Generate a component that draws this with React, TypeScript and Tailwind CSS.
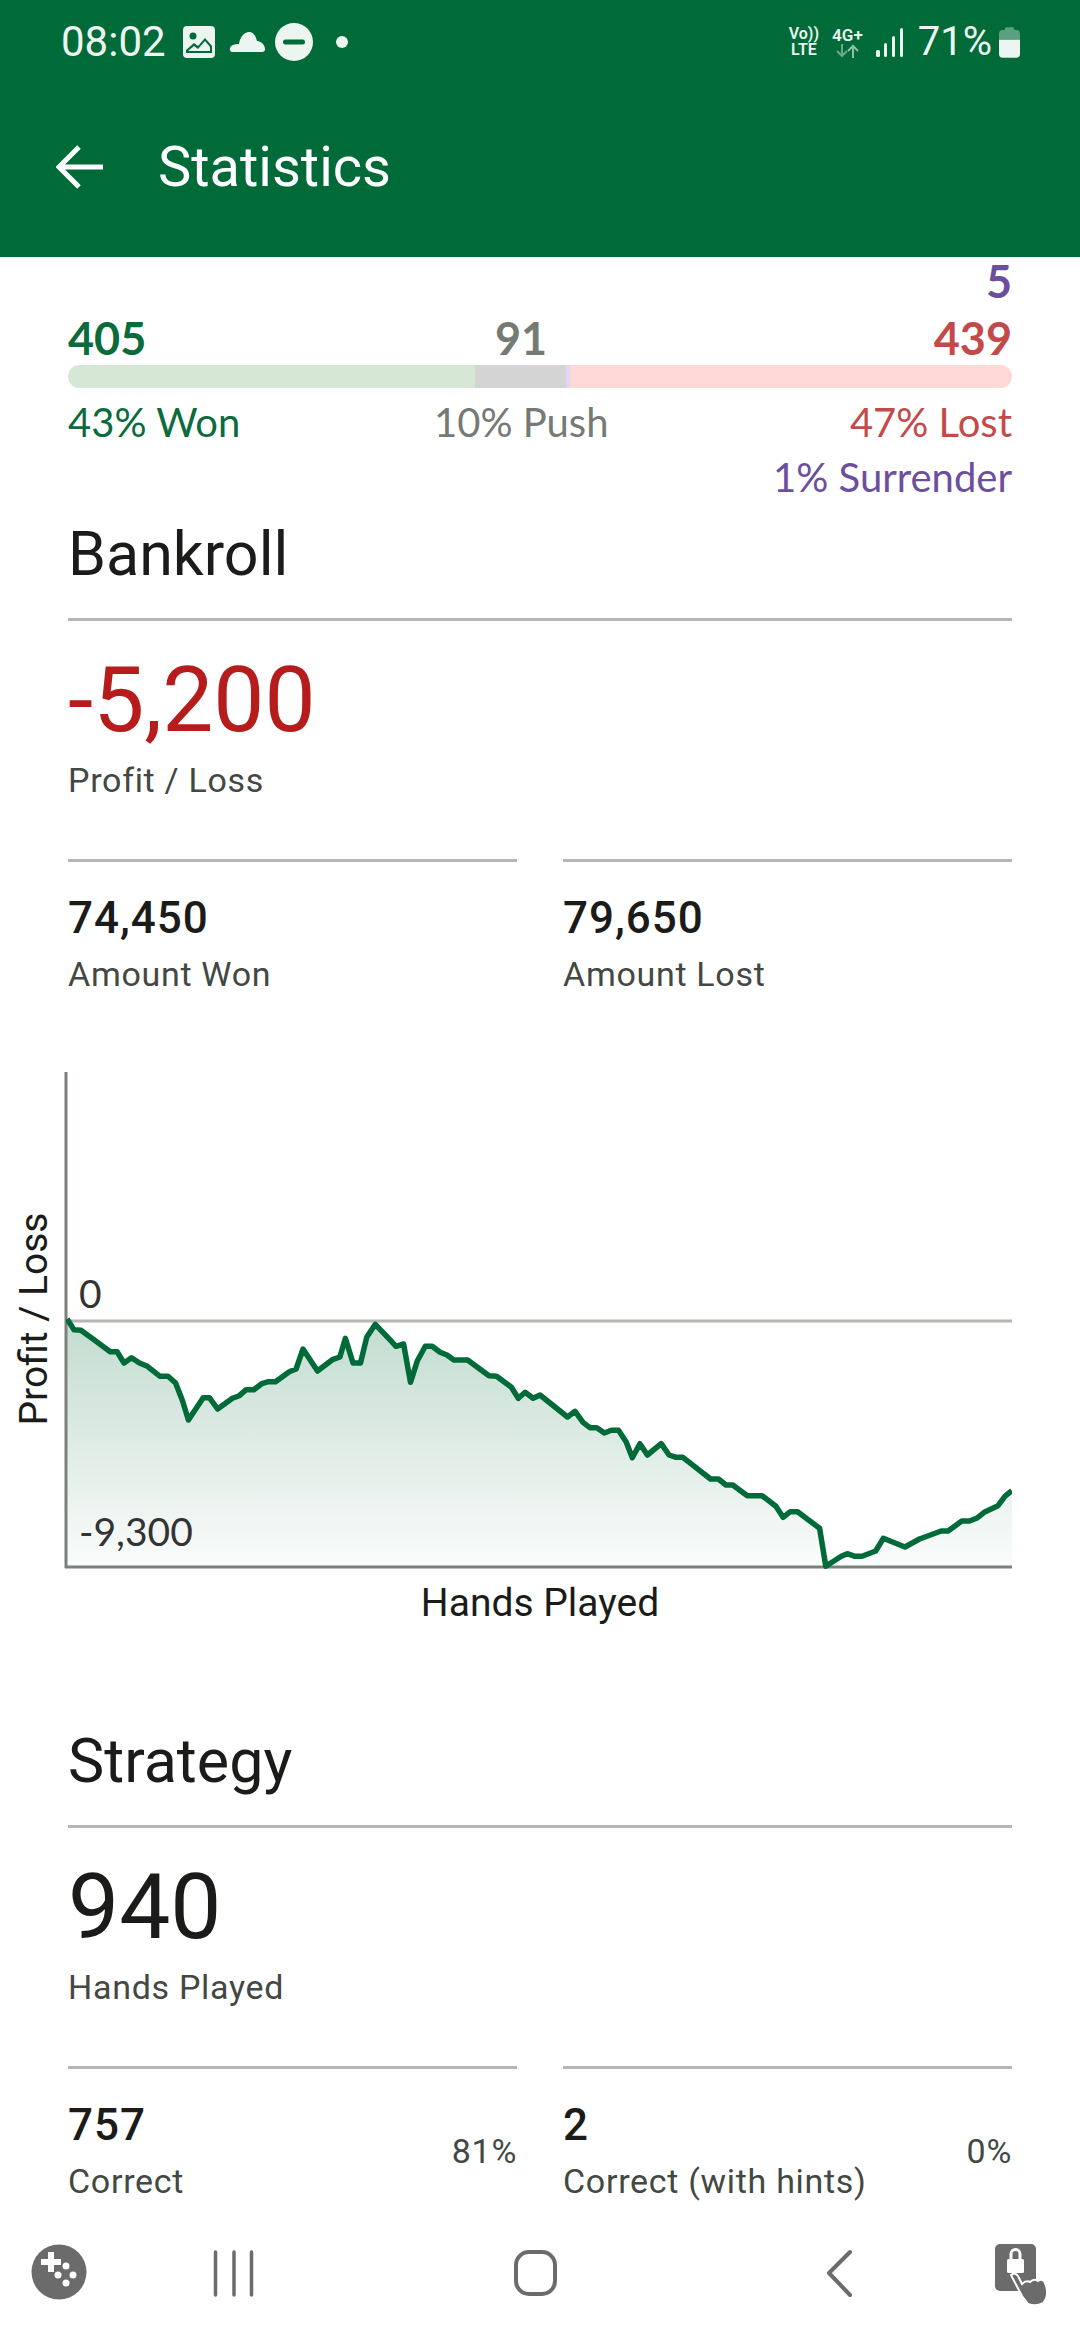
import React from 'react';

const zoomA = [[195,180],[215,212],[235,214],[270,240],[320,278],[340,278],[360,312],[382,296],[405,312],[428,322],[465,352],[488,352],[510,372],[530,425],[547,483],[590,416],[608,416],[632,450],[675,418],[695,410],[715,392],[737,392],[760,374],[780,368],[800,368],[840,338],[860,330],[880,270],[922,336],[965,302],[987,294],[1003,238],[1025,312],[1047,312],[1065,235],[1090,196],[1135,245],[1150,262],[1172,255],[1192,370],[1212,305],[1235,262],[1255,262],[1278,280],[1298,288],[1318,303],[1358,303],[1420,350],[1442,352],[1485,385],[1505,418],[1525,400],[1548,418]];
const zoomB = [[0,408],[80,474],[102,457],[125,490],[145,506],[165,506],[187,522],[207,514],[228,514],[250,548],[268,596],[290,554],[312,588],[352,554],[375,588],[395,595],[415,595],[495,660],[518,660],[540,678],[560,678],[602,710],[645,710],[685,742],[706,775],[727,758],[748,758],[812,808],[830,922],[875,892],[892,884],[915,892],[935,892],[975,876],[997,838],[1060,864],[1102,840],[1165,816],[1185,816],[1225,786],[1247,786],[1268,778],[1290,760],[1330,740],[1350,712],[1370,695]];

const points = [
  ...zoomA.map(([x, y]) => [x / 2.904, y / 3 + 1260]),
  ...zoomB.map(([x, y]) => [540 + x / 2.904, y / 3 + 1260]),
].map(([x, y]) => `${x.toFixed(1)},${(y - 1060).toFixed(1)}`);

const line = points.join(' ');
const area = `67,507 ${line} 1012,507`;

const Divider = () => <div className="h-[3px] bg-[#b4b8b2]" />;

const BigStat: React.FC<{ value: string; label: string; red?: boolean }> = ({ value, label, red }) => (
  <div className="mt-[33px]">
    <div className={`text-[91px] leading-[92px] font-['Roboto'] ${red ? 'text-[#b71c1c]' : 'text-[#1b1c1a]'}`}>{value}</div>
    <div className="mt-[12px] text-[34px] leading-[44px] text-[#434843] font-['Roboto'] tracking-[0.7px]">{label}</div>
  </div>
);

const SmallStat: React.FC<{ value: string; label: string; pct?: string }> = ({ value, label, pct }) => (
  <div className="flex-1 min-w-0">
    <Divider />
    <div className="flex items-center justify-between mt-[31px]">
      <div>
        <div className="text-[44px] leading-[50px] font-medium text-[#1b1c1a] font-['Roboto'] tracking-[1px]">{value}</div>
        <div className="mt-[9px] text-[34px] leading-[44px] text-[#434843] font-['Roboto'] tracking-[0.7px]">{label}</div>
      </div>
      {pct && <div className="text-[34px] text-[#434843] font-['Roboto'] tracking-[0.7px]">{pct}</div>}
    </div>
  </div>
);

const SectionTitle: React.FC<{ children: React.ReactNode }> = ({ children }) => (
  <div className="text-[61px] leading-[70px] text-[#1b1c1a] font-['Roboto']">{children}</div>
);

const StatusBar = () => (
  <div className="flex items-center justify-between h-[84px] pl-[61px] pr-[60px] text-[#edf5f0]">
    <div className="flex items-center">
      <span className="text-[42px] leading-none font-['Roboto']">08:02</span>
      <svg className="ml-[17px]" width="32" height="32" viewBox="0 0 32 32">
        <rect width="32" height="32" rx="4" fill="#edf5f0" />
        <circle cx="10" cy="10" r="3.500" fill="#006b38" />
        <path d="M3 27 L3 24 L11 17 L15 20 L22 12 L29 20 L29 27 Z" fill="#006b38" />
        <path d="M5 25 L11 20 L15 23 L22 15 L27 21 L27 25 Z" fill="#edf5f0" />
      </svg>
      <svg className="ml-[14px]" width="36" height="20" viewBox="0 0 36 20">
        <path d="M3 20 C0 20 0 14 4 13 C6 12 8 12 10 12 C11 5 15 0 20 0 C25 0 27 5 28 9 C32 9 36 13 36 17 C36 19 35 20 33 20 Z" fill="#edf5f0" />
      </svg>
      <svg className="ml-[10px]" width="38" height="38" viewBox="0 0 38 38">
        <circle cx="19" cy="19" r="19" fill="#edf5f0" />
        <rect x="8" y="16.500" width="22" height="5" rx="2.500" fill="#006b38" />
      </svg>
      <div className="ml-[23px] w-[12px] h-[12px] rounded-full bg-[#edf5f0]" />
    </div>
    <div className="flex items-center">
      <div className="text-[16px] leading-[16px] font-semibold font-['Roboto'] text-center">
        <div>Vo))</div>
        <div>LTE</div>
      </div>
      <div className="ml-[13px] flex flex-col items-center">
        <span className="text-[17px] leading-[16px] font-semibold font-['Roboto']">4G+</span>
        <svg width="24" height="15" viewBox="0 0 24 15" fill="none" strokeWidth="2">
          <path d="M7 1 V13 M2 8 L7 13 L12 8" stroke="#6ea98b" />
          <path d="M18 15 V3 M13 8 L18 3 L23 8" stroke="#8ec0a6" />
        </svg>
      </div>
      <svg className="ml-[13px]" width="28" height="29" viewBox="0 0 28 29" fill="#edf5f0">
        <rect x="0" y="22" width="4" height="7" rx="1.500" />
        <rect x="8" y="15" width="3" height="14" rx="1.500" />
        <rect x="16" y="8" width="3" height="21" rx="1.500" />
        <rect x="24" y="0" width="3" height="29" rx="1.500" />
      </svg>
      <span className="ml-[14px] text-[40px] leading-none font-['Roboto']">71%</span>
      <svg className="ml-[7px]" width="21" height="31" viewBox="0 0 22 32">
        <path d="M6 2 Q6 0 8 0 H14 Q16 0 16 2 V3 H18 Q22 3 22 7 V13 H0 V7 Q0 3 4 3 H6 Z" fill="#5aa27f" />
        <path d="M0 13 H22 V28 Q22 32 18 32 H4 Q0 32 0 28 Z" fill="#edf5f0" />
      </svg>
    </div>
  </div>
);

const Outcomes = () => (
  <div className="px-[68px] font-['Lato'] relative">
    <div className="text-right text-[45px] leading-[48px] font-bold text-[#6b4f9e]">5</div>
    <div className="relative h-[46px] mt-[9px] text-[45px] leading-[48px] font-bold">
      <span className="absolute left-0 top-0 text-[#0b6b3c]">405</span>
      <span className="absolute left-[427px] top-0 text-[#757a75]">91</span>
      <span className="absolute right-0 top-0 text-[#c44a4a]">439</span>
    </div>
    <div className="flex h-[23px] mt-[5px] rounded-[12px] overflow-hidden">
      <div className="w-[407px] bg-[#d5e8d6]" />
      <div className="w-[91px] bg-[#d3d4d3]" />
      <div className="w-[4px] bg-[#e0d8f0]" />
      <div className="flex-1 bg-[#ffd9d6]" />
    </div>
    <div className="relative h-[44px] mt-[12px] text-[40px] leading-[44px]">
      <span className="absolute left-0 top-0 text-[#0b6b3c]">43% Won</span>
      <span className="absolute left-[366px] top-0 text-[#757a75]">10% Push</span>
      <span className="absolute right-0 top-0 text-[#c44a4a]">47% Lost</span>
    </div>
    <div className="text-right text-[40px] leading-[44px] mt-[11px] text-[#6b4f9e]">1% Surrender</div>
  </div>
);

const Chart = () => (
  <div className="mt-[63px] px-[68px]">
    <div className="relative h-[512px]">
      <svg className="absolute left-[-68px] top-0" width="1080" height="512" viewBox="0 0 1080 512">
        <defs>
          <linearGradient id="fade" x1="0" y1="0" x2="0" y2="1">
            <stop offset="0" stopColor="#006b38" stopOpacity="0.24" />
            <stop offset="1" stopColor="#006b38" stopOpacity="0.02" />
          </linearGradient>
          <clipPath id="plot">
            <rect x="66" y="0" width="946" height="512" />
          </clipPath>
        </defs>
        <polygon points={area} fill="url(#fade)" />
        <line x1="66" y1="262" x2="1012" y2="262" stroke="#b4b8b2" strokeWidth="3" />
        <line x1="66" y1="13" x2="66" y2="509" stroke="#7b807a" strokeWidth="3" />
        <line x1="65" y1="508" x2="1012" y2="508" stroke="#7b807a" strokeWidth="3" />
        <polyline points={line} fill="none" stroke="#006b38" strokeWidth="5.500" strokeLinejoin="round" clipPath="url(#plot)" />
      </svg>
      <span className="absolute left-[11px] top-[212px] text-[39px] leading-[44px] text-[#333] font-['Lato']">0</span>
      <span className="absolute left-[11px] top-[450px] text-[39px] leading-[44px] text-[#333] font-['Lato']">-9,300</span>
      <span className="absolute left-[-34px] top-[260px] -translate-x-1/2 -translate-y-1/2 -rotate-90 whitespace-nowrap text-[39px] leading-[44px] text-[#1b1c1a] font-['Roboto']">Profit / Loss</span>
    </div>
    <div className="text-center text-[39px] leading-[44px] text-[#1b1c1a] font-['Roboto'] mt-[10px]">Hands Played</div>
  </div>
);

const NavBar = () => (
  <div className="absolute left-0 right-0 bottom-0 h-[128px] bg-white">
    <svg width="1080" height="128" viewBox="0 0 1080 128" fill="none">
      <circle cx="59" cy="60" r="27.500" fill="#6b6b6b" />
      <path d="M48 40 h6 v7 h7 v6 h-7 v7 h-6 v-7 h-7 v-6 h7 Z" fill="#fff" />
      <circle cx="66" cy="54" r="3.500" fill="#fff" />
      <circle cx="58" cy="63" r="3.500" fill="#fff" />
      <circle cx="73" cy="63" r="3.500" fill="#fff" />
      <circle cx="66" cy="71" r="3.500" fill="#fff" />
      <path d="M215.500 40 V83 M234 40 V83 M251.500 40 V83" stroke="#6b6b6b" strokeWidth="3.500" strokeLinecap="round" />
      <rect x="516" y="40" width="39" height="42" rx="13" stroke="#6b6b6b" strokeWidth="4" />
      <path d="M850 40 L829 61 L850 83" stroke="#6b6b6b" strokeWidth="4" strokeLinecap="round" strokeLinejoin="round" />
      <rect x="995" y="32" width="41" height="47" rx="5" fill="#6b6b6b" />
      <rect x="1007" y="47" width="17" height="14" rx="1.500" fill="#fff" />
      <path d="M1011 48 v-6 a4.500 4.500 0 0 1 9 0 v6" stroke="#fff" strokeWidth="3" />
      <path d="M1011 63 Q1015 60 1018 64 L1022 72 Q1026 68 1030 70 Q1034 66 1038 69 Q1043 66 1045 71 Q1050 84 1043 91 Q1036 95 1028 92 L1022 84 Z" fill="#6b6b6b" stroke="#fff" strokeWidth="2" />
    </svg>
  </div>
);

export default function App() {
  return (
    <div className="relative w-[1080px] h-[2340px] overflow-hidden bg-white font-['Roboto',sans-serif]">
      <div className="h-[257px] bg-[#006b38]">
        <StatusBar />
        <div className="flex items-center h-[173px] pb-[8px] pl-[56px]">
          <svg width="48" height="44" viewBox="0 0 48 44" fill="none" stroke="#fff" strokeWidth="5">
            <path d="M47 22 H4 M23 2 L3 22 L23 42" />
          </svg>
          <span className="ml-[54px] text-[56px] leading-none text-white font-['Roboto']">Statistics</span>
        </div>
      </div>
      <Outcomes />
      <div className="px-[68px] mt-[20px]">
        <SectionTitle>Bankroll</SectionTitle>
        <div className="mt-[29px]"><Divider /></div>
        <BigStat value="-5,200" label="Profit / Loss" red />
        <div className="flex gap-[46px] mt-[57px]">
          <SmallStat value="74,450" label="Amount Won" />
          <SmallStat value="79,650" label="Amount Lost" />
        </div>
      </div>
      <Chart />
      <div className="px-[68px] mt-[101px]">
        <SectionTitle>Strategy</SectionTitle>
        <div className="mt-[29px]"><Divider /></div>
        <BigStat value="940" label="Hands Played" />
        <div className="flex gap-[46px] mt-[57px]">
          <SmallStat value="757" label="Correct" pct="81%" />
          <SmallStat value="2" label="Correct (with hints)" pct="0%" />
        </div>
      </div>
      <NavBar />
    </div>
  );
}
